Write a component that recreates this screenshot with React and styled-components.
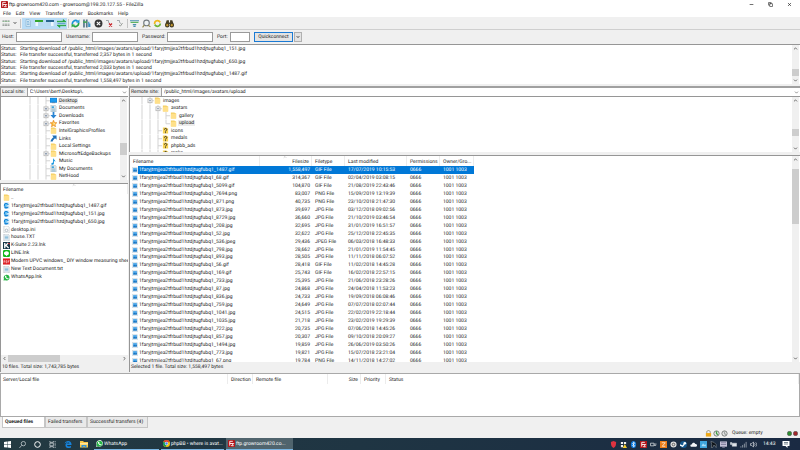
import styled, { createGlobalStyle, css } from "styled-components";
import {
  ChevronDown,
  ChevronUp,
  ChevronLeft,
  ChevronRight,
  Minus,
  Copy,
  X,
} from "lucide-react";

const GlobalStyle = createGlobalStyle`
  * {
    box-sizing: border-box;
  }

  body {
    margin: 0;
    background: #f0f0f0;
  }

  body, button, input, select, table {
    font-family: Roboto, "Liberation Sans", sans-serif;
    font-size: 5px;
    line-height: 6px;
    color: #1c1c1c;
    text-rendering: geometricPrecision;
  }
`;

/* ---------- icons ---------- */

const Svg = styled.svg`
  flex: none;
  display: block;
  width: ${(p) => p.$size || 7}px;
  height: ${(p) => p.$size || 7}px;
`;

const Icon = ({ size, children }) => (
  <Svg $size={size} viewBox="0 0 16 16" fill="none" aria-hidden="true">
    {children}
  </Svg>
);

const FileZillaIcon = ({ size }) => (
  <Icon size={size}>
    <rect width="16" height="16" rx="1" fill="#b4161b" />
    <path d="M4 13V3h7M4 8h5M8 8h5l-5 5h5" stroke="#fff" strokeWidth="2" />
  </Icon>
);

const FolderIcon = ({ size }) => (
  <Icon size={size}>
    <path d="M2 1h8l2 2h2v12H2z" fill="#f5cf63" />
    <path d="M4 4h10v11H2V6z" fill="#ffe08a" />
  </Icon>
);

const UnknownIcon = () => (
  <Icon>
    <path d="M2 1h8l2 2h2v12H2z" fill="#f6d254" />
    <path
      d="M5.500 6c0-3.500 5.500-3.500 5.500 0 0 2-3 2-3 4.500M8 12v2"
      stroke="#222"
      strokeWidth="2"
    />
  </Icon>
);

const DesktopIcon = () => (
  <Icon>
    <rect x="0" y="2" width="16" height="11" fill="#0c7cd5" />
    <rect x="1" y="3" width="14" height="8" fill="#1e9bf0" />
    <rect x="4" y="13" width="8" height="1" fill="#4a5a66" />
  </Icon>
);

const DocumentsIcon = () => (
  <Icon>
    <path d="M2 0h9l3 3v13H2z" fill="#dfe6ea" stroke="#9ba9b3" />
    <rect x="4" y="3" width="5" height="4" fill="#3fa3dc" />
    <path d="M4 9h8M4 11.500h8M4 14h8" stroke="#5b9dc4" />
  </Icon>
);

const DownloadIcon = () => (
  <Icon>
    <path d="M6 0h4v7h5l-7 8-7-8h5z" fill="#2a84d2" />
  </Icon>
);

const StarIcon = () => (
  <Icon>
    <path
      d="M8 0l2.300 5.500 5.700.5-4.300 4 1.300 6-5-3.200L3 16l1.300-6L0 6l5.700-.5z"
      fill="#f9b233"
      stroke="#df7d18"
    />
    <path d="M8 4l1.200 3 3 .2-2.200 2 .6 3L8 10.500z" fill="#fff0b3" />
  </Icon>
);

const LinkIcon = () => (
  <Icon>
    <path d="M5 1h10v10l-3.500-3.500C9 10 7 12 6 15H1c1-5 4-8 7-10z" fill="#2170b8" />
  </Icon>
);

const MusicIcon = () => (
  <Icon>
    <path d="M7 0c1 4 6 4 5 9-1-2-2-2-3-3v6c0 4-6 5-6 1.500C3 11 6 10.500 7 11z" fill="#1796e0" />
  </Icon>
);

const ImageFileIcon = () => (
  <Icon size={6}>
    <path d="M1 0h11l3 3v13H1z" fill="#e3edf4" stroke="#b3c3cf" />
    <rect x="3" y="3" width="10" height="9" fill="#49a5e8" />
    <path d="M3 10l4-3 3 2 3-2v5H3z" fill="#1a72bd" />
  </Icon>
);

const LocalImageIcon = () => (
  <Icon>
    <path d="M3 0h9l3 3v13H3z" fill="#dcecf8" />
    <path d="M2 7c0-6 10-6 11 0H9L7 10H2zM3 11h10c-1 5-8 5-10 2z" fill="#1686d8" />
    <rect x="5" y="5" width="5" height="5" fill="#7accf5" />
  </Icon>
);

const TextFileIcon = () => (
  <Icon>
    <path d="M2 0h9l3 3v13H2z" fill="#f5f7f8" stroke="#8c9aa5" />
    <path d="M4 5h8M4 8h8M4 11h8" stroke="#5ba4cd" strokeWidth="1.500" />
  </Icon>
);

const IniFileIcon = () => (
  <Icon>
    <path d="M2 0h9l3 3v13H2z" fill="#fcfcfc" stroke="#a4a9ad" />
    <circle cx="8" cy="10" r="3" stroke="#a8b4bd" strokeWidth="2" />
  </Icon>
);

const KSuiteIcon = () => (
  <Icon>
    <rect width="16" height="16" fill="#153648" />
    <path d="M4 2v12M5 9l7-7M6 7l7 7" stroke="#fff" strokeWidth="3" />
    <path d="M10 2h5v4z" fill="#d53535" />
  </Icon>
);

const LineIcon = () => (
  <Icon>
    <rect width="16" height="16" rx="3" fill="#12b81c" />
    <path d="M8 3c7 0 7 7 2 9l-3 2v-2C0 11 1 3 8 3z" fill="#fff" />
  </Icon>
);

const PdfIcon = () => (
  <Icon>
    <rect y="1" width="16" height="14" fill="#dd2026" />
    <path d="M2 11V6h2v3H2M7 6v5h2V6zM12 11V6h3M12 8h2" stroke="#fff" />
  </Icon>
);

const WhatsAppIcon = () => (
  <Icon>
    <path d="M0 16l1.500-5A7.500 7.500 0 1 1 5 14.500z" fill="#fff" />
    <path d="M1 15l1.200-4A6.700 6.700 0 1 1 5 14z" fill="#25b544" />
    <path d="M5 4c-2 3 3 9 7 8l1-2-2-1-1 1-3-3 1-1-1-2z" fill="#fff" />
  </Icon>
);

const SiteManagerIcon = () => (
  <Icon size={8}>
    <path
      d="M1 2h4v4H1zM6 2h4v4H6zM11 2h4v4h-4zM1 9h4v4H1zM6 9h4v4H6zM11 9h4v4h-4z"
      fill="#b5bbb7"
    />
    <path d="M1 5h4M6 5h4M11 5h4" stroke="#6cb271" />
    <path d="M1 13h4M6 13h4M11 13h4" stroke="#6f7471" />
  </Icon>
);

const LogViewIcon = () => (
  <Icon size={8}>
    <path d="M4 1h6l3 3v11H4z" fill="#cfe6f5" stroke="#7fa9c6" />
    <path d="M6 5h4M6 8h5M6 11h5" stroke="#4c92c6" />
  </Icon>
);

const LocalTreeIcon = () => (
  <Icon size={8}>
    <path d="M0 2h16v4H0z" fill="#35a52e" />
    <path d="M1 6v8h5V6z" fill="#eef7ff" />
    <path d="M7 6h8v8H7z" fill="#b8d9ef" />
  </Icon>
);

const RemoteTreeIcon = () => (
  <Icon size={8}>
    <path d="M0 2h16v4H0z" fill="#276590" />
    <path d="M1 6h8v8H1z" fill="#b8d9ef" />
    <path d="M10 6h5v8h-5z" fill="#eef7ff" />
  </Icon>
);

const QueueViewIcon = () => (
  <Icon size={9}>
    <path d="M0 4h11V1l5 4H0zM16 12H5v3L0 11h16z" fill="#18a02d" stroke="#18a02d" />
    <path d="M1 8h14" stroke="#2176bc" />
  </Icon>
);

const RefreshIcon = () => (
  <Icon size={9}>
    <path d="M2.500 9a5.500 5.500 0 0 1 9-5" stroke="#1795d8" strokeWidth="3" />
    <path d="M13.500 7a5.500 5.500 0 0 1-9 5" stroke="#23a743" strokeWidth="3" />
    <path d="M9 6l6 1V1z" fill="#1795d8" />
    <path d="M7 10l-6-1v6z" fill="#23a743" />
  </Icon>
);

const ProcessIcon = () => (
  <Icon size={9}>
    <path d="M2 1h3v14H2zM7 1h3v14H7z" fill="#58788b" />
    <path d="M12 5v9M14 8v6" stroke="#3b92c6" strokeWidth="2" />
    <path d="M2 4h7v3H2z" fill="#49a35a" />
  </Icon>
);

const CancelIcon = () => (
  <Icon size={9}>
    <circle cx="8" cy="8" r="7" fill="#373737" />
    <path d="M5 5l6 6M11 5l-6 6" stroke="#fff" strokeWidth="2" />
  </Icon>
);

const DisconnectIcon = () => (
  <Icon size={8}>
    <path d="M2 3h5v4l3 2" stroke="#a3a8ac" strokeWidth="2" />
    <path d="M8 9l6 6M14 9l-6 6" stroke="#c92129" strokeWidth="2.500" />
  </Icon>
);

const ReconnectIcon = () => (
  <Icon size={8}>
    <path d="M2 3h5v4l3 2" stroke="#a3a8ac" strokeWidth="2" />
    <path d="M6 12l3 2 4-6" stroke="#9a9f9a" strokeWidth="2" />
  </Icon>
);

const FilterIcon = () => (
  <Icon size={9}>
    <path d="M0 3h16M5 10h6M6 13h4" stroke="#4a8fae" strokeWidth="2" />
    <path d="M1 5h14v2H1z" fill="#57b05a" />
  </Icon>
);

const CompareIcon = () => (
  <Icon size={9}>
    <circle cx="8" cy="7" r="5" fill="#eef3f5" stroke="#747b80" strokeWidth="2" />
    <path d="M4 11l-3 4M11 11l4 3" stroke="#92874b" strokeWidth="2" />
  </Icon>
);

const SyncIcon = () => (
  <Icon size={9}>
    <path d="M3 9a5 5 0 0 1 8-5l2 2" stroke="#f0b81c" strokeWidth="3" />
    <path d="M13 8a5 5 0 0 1-8 4l-2-2" stroke="#6fb536" strokeWidth="3" />
  </Icon>
);

const BinocularsIcon = () => (
  <Icon size={9}>
    <path d="M3 2h4v4h2V2h4l3 9H9V9H7v2H0z" fill="#453d25" />
    <circle cx="4" cy="11" r="3" fill="#c89b30" stroke="#453d25" strokeWidth="2" />
    <circle cx="12" cy="11" r="3" fill="#c89b30" stroke="#453d25" strokeWidth="2" />
  </Icon>
);

const WindowsIcon = () => (
  <Icon>
    <path d="M0 2l7-1v6.500H0zM8 1l8-1v7.500H8zM0 8.500h7V15l-7-1zM8 8.500h8V16l-8-1z" fill="#fff" />
  </Icon>
);

const SearchIcon = () => (
  <Icon>
    <circle cx="10" cy="6" r="5" stroke="#e2e7e9" strokeWidth="1.500" />
    <path d="M6 10l-5 6" stroke="#e2e7e9" strokeWidth="1.500" />
  </Icon>
);

const CortanaIcon = () => (
  <Icon>
    <circle cx="8" cy="8" r="6.500" stroke="#fff" strokeWidth="2.200" />
  </Icon>
);

const TaskViewIcon = () => (
  <Icon>
    <path d="M2 0v3h8V0M2 16v-3h8v3M2 5h8v6H2zM14 0v3M14 5v6M14 13v3" stroke="#e2e7e9" strokeWidth="1.500" />
  </Icon>
);

const EdgeIcon = () => (
  <Icon size={8}>
    <path
      d="M1 8C2 1 14-1 15 8v2H6c1 4 5 3 8 2v3C8 18 2 15 3 9c1-2 2-3 4-4-3 0-5 1-6 3zM6 7h5c0-3-4-3-5 0z"
      fill="#1683dc"
    />
  </Icon>
);

const ExplorerIcon = () => (
  <Icon size={8}>
    <path d="M0 2h6l2 2h8v11H0z" fill="#f8c745" />
    <path d="M0 6h16v3H0z" fill="#ffe59a" />
    <path d="M3 15v-5h10v5h-3v-2H6v2z" fill="#3193d8" />
  </Icon>
);

const ChromeIcon = () => (
  <Icon>
    <circle cx="8" cy="8" r="8" fill="#f4c20d" />
    <path d="M8 8L1 4a8 8 0 0 1 14 0z" fill="#db4437" />
    <path d="M8 8L1 4a8 8 0 0 0 6 12z" fill="#0f9d58" />
    <circle cx="8" cy="8" r="3.800" fill="#fff" />
    <circle cx="8" cy="8" r="2.800" fill="#4285f4" />
  </Icon>
);

const LockIcon = () => (
  <Icon>
    <path d="M4 8V5c0-5 8-5 8 0v3" stroke="#8b8673" strokeWidth="2" />
    <rect x="2" y="7" width="12" height="8" fill="#eda715" />
  </Icon>
);

const GearIcon = ({ fill }) => (
  <Icon>
    <circle cx="8" cy="8" r="6" stroke="#6e7370" strokeWidth="2" fill="#e8e8e8" />
    <path d="M8 3v5l3 3" stroke={fill} strokeWidth="3" />
  </Icon>
);

const Led = ({ fill }) => (
  <Icon size={5}>
    <circle cx="8" cy="8" r="7" fill={fill} stroke="#555" strokeWidth="2" />
  </Icon>
);

const trayIcons = [
  <path key="shield" d="M2 2l6-2 6 2c0 7-1 11-6 14C3 13 2 9 2 2z" fill="#df3340" />,
  <g key="defender">
    <path d="M2 2h5v5H2zM9 2h5v5H9zM2 9h5v5H2z" fill="#f2f2f2" />
    <path d="M11 7l5 9H6z" fill="#f3cb2c" />
  </g>,
  <g key="bluetooth">
    <ellipse cx="8" cy="8" rx="6" ry="8" fill="#0f7be0" />
    <path d="M5 5l6 6-3 3V2l3 3-6 6" stroke="#fff" strokeWidth="1.500" />
  </g>,
  <g key="filezilla">
    <rect width="16" height="16" fill="#b4161b" />
    <path d="M4 13V3h7M4 8h5M8 8h5l-5 5h5" stroke="#fff" strokeWidth="2" />
  </g>,
  <path key="plug" d="M1 5h8v6H1zM9 7h6M9 10h5" stroke="#c0c6cc" strokeWidth="2" />,
  <g key="orange">
    <rect width="16" height="16" fill="#ed7d1a" />
    <path d="M4 4h8l-7 8h7" stroke="#ffe7cf" strokeWidth="2" />
  </g>,
  <g key="disc">
    <circle cx="8" cy="8" r="7" fill="#dedede" />
    <circle cx="8" cy="8" r="3" stroke="#555" strokeWidth="2" />
  </g>,
  <g key="steam">
    <circle cx="8" cy="8" r="8" fill="#16588f" />
    <circle cx="11" cy="5" r="3" fill="#fff" />
    <path d="M0 9l6 3 4-5" stroke="#fff" strokeWidth="3" />
  </g>,
  <path key="cloud" d="M2 13c-3-3 0-6 2-5 1-6 8-5 8-1 5 0 5 5 2 6z" fill="#f3f5f7" />,
  <g key="photo">
    <rect width="16" height="16" fill="#3ea4de" />
    <path d="M3 12l4-7 3 4 2-2 2 5z" fill="#a7dcf8" />
  </g>,
  <path key="horse" d="M2 1l7 2 5 5v7l-5-6-3 6H3l1-7z" fill="#0b1118" stroke="#b4b9bd" />,
  <g key="monitor">
    <rect y="1" width="16" height="12" fill="#c6c3d8" />
    <path d="M2 4h12M2 8h12M5 15h6" stroke="#7d7a99" strokeWidth="2" />
  </g>,
  <path key="battery" d="M1 3v5h3V3M5 5h10v7H5z" fill="#dfe4e8" stroke="#dfe4e8" />,
  <path key="wifi" d="M2 15v-3M6 15V9M10 15V6M14 15V2" stroke="#939eaa" strokeWidth="2" />,
  <path
    key="volume"
    d="M1 6h3l4-4v12l-4-4H1zM10 5c2 2 2 4 0 6M13 3c3 3 3 7 0 10"
    stroke="#dfe4e8"
    strokeWidth="1.500"
  />,
];

/* ---------- window frame ---------- */

const Page = styled.div`
  display: flex;
  flex-direction: column;
  height: 100vh;
  min-width: 480px;
  overflow: hidden;
  white-space: nowrap;
`;

const TitleBar = styled.header`
  display: flex;
  align-items: center;
  gap: 1px;
  flex: none;
  height: 9px;
  padding: 0 8px 0 1px;
  background: #fff;
`;

const WindowTitle = styled.h1`
  flex: 1;
  margin: 0;
  padding-top: 1px;
  font-size: 5px;
  font-weight: 400;
`;

const WindowButtons = styled.div`
  display: flex;
  gap: 14px;
`;

const PlainButton = styled.button`
  display: flex;
  align-items: center;
  justify-content: center;
  flex: none;
  padding: 0;
  border: 0;
  background: transparent;
`;

const MenuBar = styled.nav`
  display: flex;
  flex: none;
  gap: 5px;
  height: 8px;
  padding: 2px 3px 0;
  background: #fff;
`;

const MenuLink = styled.a`
  color: inherit;
  text-decoration: none;
`;

const Toolbar = styled.div`
  display: flex;
  align-items: center;
  flex: none;
  height: 13px;
  padding-left: 2px;
  background: #f0f0f0;
  border-bottom: 1px solid #cfcfcf;
`;

const ToolGroup = styled.div`
  display: flex;
  width: ${(p) => p.$width}px;
  background: ${(p) => (p.$pressed ? "#b9dcf6" : "transparent")};
`;

const ToolButton = styled(PlainButton)`
  flex: 1;
  height: 11px;
`;

const ToolSeparator = styled.span`
  width: 1px;
  height: 9px;
  margin: 0 1px;
  background: #c4c4c4;
`;

const ConnectBar = styled.form`
  display: flex;
  align-items: center;
  flex: none;
  gap: 4px;
  height: 14px;
  padding-left: 2px;
`;

const Field = styled.label`
  display: flex;
  align-items: center;
  justify-content: space-between;
  width: ${(p) => p.$width}px;
`;

const TextInput = styled.input`
  width: ${(p) => p.$width}px;
  height: 10px;
  padding: 0 2px;
  border: 1px solid #9a9a9a;
  background: #fff;
`;

const ConnectButton = styled.button`
  width: 39px;
  height: 10px;
  padding: 0;
  border: 1px solid #1a7ad4;
  background: #e3e3e3;
`;

const ConnectMenuButton = styled(PlainButton)`
  width: 8px;
  height: 10px;
  margin-left: -3px;
  border: 1px solid #b0b0b0;
  background: #e3e3e3;
`;

/* ---------- panes ---------- */

const Pane = styled.section`
  display: flex;
  min-width: 0;
  min-height: 0;
  flex: ${(p) => (p.$height ? "none" : "1")};
  height: ${(p) => (p.$height ? `${p.$height}px` : "auto")};
  border-top: 1px solid #969696;
  border-left: 1px solid #969696;
  background: #fff;
`;

const PaneBody = styled.div`
  flex: 1;
  min-width: 0;
  min-height: 0;
  overflow: hidden;
`;

const Splitter = styled.div`
  flex: none;
  height: 3px;
`;

const ScrollTrack = styled.div`
  display: flex;
  flex: none;
  flex-direction: ${(p) => (p.$horizontal ? "row" : "column")};
  align-items: center;
  ${(p) => (p.$horizontal ? "height: 7px;" : "width: 7px; margin-right: 1px;")}
  background: #f0f0f0;
`;

const ScrollSpace = styled.span`
  flex: ${(p) => p.$grow} 1 0;
  align-self: stretch;
  background: ${(p) => (p.$thumb ? "#cdcdcd" : "transparent")};
`;

const ScrollButton = styled(PlainButton)`
  width: 7px;
  height: 7px;
`;

const ScrollBar = ({ horizontal, before, thumb, after }) => {
  const Start = horizontal ? ChevronLeft : ChevronUp;
  const End = horizontal ? ChevronRight : ChevronDown;
  return (
    <ScrollTrack $horizontal={horizontal}>
      <ScrollButton type="button" aria-label="Scroll back">
        <Start size={5} strokeWidth={4} color="#555" />
      </ScrollButton>
      <ScrollSpace $grow={before} />
      <ScrollSpace $grow={thumb} $thumb />
      <ScrollSpace $grow={after} />
      <ScrollButton type="button" aria-label="Scroll forward">
        <End size={5} strokeWidth={4} color="#555" />
      </ScrollButton>
    </ScrollTrack>
  );
};

const LogList = styled.ol`
  display: flex;
  flex-direction: column;
  height: 39px;
  margin: 0;
  padding: 1px 0 0;
  list-style: none;
`;

const LogLine = styled.li`
  display: flex;
  flex: 1;
  align-items: center;
`;

const LogType = styled.span`
  width: 19px;
`;

const Workspace = styled.main`
  display: flex;
  flex: 1;
  gap: 2px;
  min-height: 0;
  padding: 2px 0 1px;
`;

const Side = styled.div`
  display: flex;
  flex-direction: column;
  min-width: 0;
  ${(p) => (p.$local ? "width: 16%; margin-right: -1px;" : "flex: 1;")}
`;

const SiteBar = styled.div`
  display: flex;
  flex: none;
  height: 10px;
  border-top: 2px solid #a0a0a0;
  border-left: 1px solid #969696;
  background: #fff;
`;

const SiteLabel = styled.label`
  display: flex;
  align-items: center;
  padding: 0 2px 0 1px;
  border-right: 1px solid #a0a0a0;
  background: #f0f0f0;
`;

const SiteSelect = styled.select`
  flex: 1;
  min-width: 0;
  padding: 0 2px;
  border: 0;
  appearance: none;
  background: transparent;
`;

const SiteArrow = styled.span`
  display: flex;
  align-items: center;
  padding: 0 1px;
  pointer-events: none;
`;

const Tree = styled.ul`
  display: flex;
  flex-direction: column;
  height: ${(p) => p.$height}px;
  margin: 0;
  padding: 0 0 0 ${(p) => p.$indent}px;
  list-style: none;
`;

const TreeItem = styled.li`
  display: flex;
  align-items: center;
  flex: 1;
  min-height: 0;
`;

const TreeLabel = styled.span`
  margin-left: 1px;
  padding: 0 1px;
  background: ${(p) => (p.$active ? "#ececec" : "transparent")};
`;

const Guide = styled.svg`
  flex: none;
  align-self: stretch;
  width: 8px;
`;

const TreeGuide = ({ kind }) => (
  <Guide viewBox="0 0 8 8" preserveAspectRatio="none" fill="none" aria-hidden="true">
    <path
      d={{ v: "M4 0v8", l: "M4 0v4h4" }[kind] || "M4 0v8M4 4h4"}
      stroke="#d2d2d2"
    />
    {(kind === "+" || kind === "-") && (
      <>
        <rect x="2" y="2" width="4" height="4" fill="#fff" stroke="#bdbdbd" />
        <path d={kind === "+" ? "M3 4h2M4 3v2" : "M3 4h2"} stroke="#8090a5" />
      </>
    )}
  </Guide>
);

const TreeView = ({ nodes, height, indent }) => (
  <Tree $height={height} $indent={indent}>
    {nodes.map(([guides, NodeIcon, label, active]) => (
      <TreeItem key={label}>
        {guides.split("").map((kind, i) => (
          <TreeGuide key={i} kind={kind} />
        ))}
        <NodeIcon />
        <TreeLabel $active={active}>{label}</TreeLabel>
      </TreeItem>
    ))}
  </Tree>
);

/* ---------- tables ---------- */

const Table = styled.table`
  display: flex;
  flex-direction: column;
`;

const gridRow = css`
  display: grid;
  grid-template-columns: ${(p) => p.$columns};
`;

const HeadRow = styled.tr`
  ${gridRow}
  height: ${(p) => p.$height || 10}px;
`;

const HeadCell = styled.th`
  position: relative;
  padding: 3px 2px 0 ${(p) => (p.$flush ? 2 : 3)}px;
  overflow: hidden;
  border-right: 1px solid #ececec;
  font-weight: 400;
  text-align: ${(p) => (p.$right ? "right" : "left")};
`;

const SortMark = styled(ChevronUp)`
  position: absolute;
  top: -1px;
  left: ${(p) => p.$left};
`;

const Body = styled.tbody`
  display: flex;
  flex-direction: column;
  height: ${(p) => p.$height}px;
`;

const BodyRow = styled.tr`
  ${gridRow}
  flex: 1;
  min-height: 0;
  color: ${(p) => (p.$selected ? "#fff" : "inherit")};
`;

const Cell = styled.td`
  display: flex;
  align-items: center;
  justify-content: ${(p) => (p.$right ? "flex-end" : "flex-start")};
  padding: 0 2px 0 3px;
  background: ${(p) => (p.$selected ? "#0078d7" : "transparent")};
`;

const NameCell = styled.td`
  display: flex;
  align-items: center;
  padding: 0 0 0 2px;
`;

const FileName = styled.span`
  display: flex;
  align-items: center;
  flex: 1;
  align-self: stretch;
  padding-left: 1px;
  background: ${(p) => (p.$selected ? "#0078d7" : "transparent")};
`;

const Column = styled.div`
  display: flex;
  flex: 1;
  flex-direction: column;
  min-width: 0;
`;

const PaneStatus = styled.p`
  flex: none;
  height: 10px;
  margin: 0;
  padding: 2px 1px;
  border-left: 1px solid #969696;
`;

const QueuePane = styled.section`
  flex: none;
  height: 44px;
  border: 1px solid #a9a9a9;
  background: #fff;
`;

const TabList = styled.div`
  display: flex;
  flex: none;
  height: 11px;
  padding-left: 2px;
`;

const Tab = styled.button`
  min-width: ${(p) => p.$width}px;
  padding: 0 2px;
  border: 1px solid #c6c6c6;
  border-top: 0;
  background: ${(p) => (p.$active ? "#fff" : "#e9e9e9")};
  font-weight: ${(p) => (p.$active ? 700 : 400)};
  text-align: left;
`;

const StatusBar = styled.footer`
  display: flex;
  align-items: center;
  justify-content: flex-end;
  flex: none;
  gap: 1px;
  height: 10px;
  padding-right: 2px;
`;

const QueueState = styled.span`
  width: 54px;
  margin-left: 3px;
`;

const Taskbar = styled.nav`
  display: flex;
  align-items: center;
  flex: none;
  height: 12px;
  padding-left: 4px;
  background: linear-gradient(90deg, #233a42, #1f3543 45%, #1a2a43);
`;

const TaskButtons = styled.div`
  display: flex;
  gap: 8px;
  width: 90px;
`;

const TaskWindow = styled.button`
  display: flex;
  align-items: center;
  gap: 1px;
  width: ${(p) => p.$width}px;
  height: 12px;
  margin-right: 2px;
  padding: 0 2px;
  border: 0;
  border-bottom: 1px solid #79b6e4;
  background: ${(p) => (p.$active ? "#50646d" : "transparent")};
  color: #fff;
`;

const Tray = styled.div`
  display: flex;
  align-items: center;
  gap: 3px;
  margin-left: auto;
  padding-right: 10px;
  color: #fff;
`;

const Clock = styled.time`
  width: 16px;
  margin-left: 3px;
`;

/* ---------- data ---------- */

const HASH = "1faryjtmjjea2tfrbud1hzdjtugfubq1_";

const log = [
  `Starting download of /public_html/images/avatars/upload/${HASH}151.jpg`,
  "File transfer successful, transferred 2,357 bytes in 1 second",
  `Starting download of /public_html/images/avatars/upload/${HASH}650.jpg`,
  "File transfer successful, transferred 2,033 bytes in 1 second",
  `Starting download of /public_html/images/avatars/upload/${HASH}1487.gif`,
  "File transfer successful, transferred 1,558,497 bytes in 1 second",
];

// one letter per guide column: v line, t tee, l last, + and - expanders
const localTree = [
  ["vvt", DesktopIcon, "Desktop", true],
  ["vv+", DocumentsIcon, "Documents"],
  ["vv+", DownloadIcon, "Downloads"],
  ["vv+", StarIcon, "Favorites"],
  ["vvt", FolderIcon, "IntelGraphicsProfiles"],
  ["vvt", LinkIcon, "Links"],
  ["vvt", FolderIcon, "Local Settings"],
  ["vv+", FolderIcon, "MicrosoftEdgeBackups"],
  ["vvt", MusicIcon, "Music"],
  ["vvt", DocumentsIcon, "My Documents"],
  ["vvt", FolderIcon, "NetHood"],
];

const remoteTree = [
  ["v-", FolderIcon, "images"],
  ["vv-", FolderIcon, "avatars"],
  ["vvvt", FolderIcon, "gallery"],
  ["vvvl", FolderIcon, "upload", true],
  ["vvt", UnknownIcon, "icons"],
  ["vvt", UnknownIcon, "medals"],
  ["vvt", UnknownIcon, "phpbb_ads"],
  ["vvt", UnknownIcon, "ranks"],
];

const localFiles = [
  [FolderIcon, ".."],
  [LocalImageIcon, `${HASH}1487.gif`],
  [LocalImageIcon, `${HASH}151.jpg`],
  [LocalImageIcon, `${HASH}650.jpg`],
  [IniFileIcon, "desktop.ini"],
  [TextFileIcon, "house.TXT"],
  [KSuiteIcon, "K-Suite 2.23.lnk"],
  [LineIcon, "LINE.lnk"],
  [PdfIcon, "Modern UPVC windows_ DIY window measuring sheet"],
  [TextFileIcon, "New Text Document.txt"],
  [WhatsAppIcon, "WhatsApp.lnk"],
];

const remoteFiles = [
  ["1487.gif", "1,558,497", "17/07/2019 10:15:53"],
  ["68.gif", "314,367", "02/04/2019 03:08:15"],
  ["5099.gif", "104,870", "21/08/2019 22:43:46"],
  ["7694.png", "83,007", "15/09/2019 13:19:39"],
  ["871.png", "40,735", "23/10/2018 21:47:30"],
  ["873.jpg", "39,697", "03/12/2018 09:02:56"],
  ["8729.jpg", "36,660", "21/10/2019 03:46:54"],
  ["208.jpg", "32,695", "31/01/2019 16:51:57"],
  ["52.jpg", "32,622", "25/12/2018 22:45:35"],
  ["536.jpeg", "29,436", "06/03/2018 16:48:33"],
  ["798.jpg", "28,662", "21/01/2019 11:54:45"],
  ["893.jpg", "28,505", "11/11/2018 06:07:52"],
  ["56.gif", "28,418", "11/02/2018 14:45:28"],
  ["169.gif", "25,743", "16/02/2018 22:57:15"],
  ["733.jpg", "25,395", "21/06/2018 23:28:26"],
  ["87.jpg", "24,868", "24/04/2018 11:53:23"],
  ["836.jpg", "24,733", "19/09/2018 06:08:46"],
  ["759.jpg", "24,649", "07/07/2018 02:07:44"],
  ["1041.jpg", "24,515", "22/02/2019 22:18:44"],
  ["1035.jpg", "21,718", "23/02/2019 19:29:39"],
  ["722.jpg", "20,735", "07/06/2018 14:45:26"],
  ["857.jpg", "20,307", "09/10/2018 20:09:27"],
  ["1494.jpg", "19,859", "26/06/2019 03:50:26"],
  ["773.jpg", "19,821", "15/07/2018 23:21:04"],
  ["67.png", "19,784", "14/11/2018 14:27:02"],
];

const REMOTE_COLUMNS = "130px 52px 33px 62px 33px 34px";
const QUEUE_COLUMNS = "227px 25px 75px 33px 25px 1fr";

const viewTools = [
  ["Toggle message log", LogViewIcon],
  ["Toggle local tree", LocalTreeIcon],
  ["Toggle remote tree", RemoteTreeIcon],
  ["Toggle transfer queue", QueueViewIcon],
];

const transferTools = [
  ["Refresh", RefreshIcon],
  ["Process queue", ProcessIcon],
  ["Cancel", CancelIcon],
  ["Disconnect", DisconnectIcon],
  ["Reconnect", ReconnectIcon],
];

const searchTools = [
  ["Filter", FilterIcon],
  ["Compare", CompareIcon],
  ["Synchronized browsing", SyncIcon],
  ["Find files", BinocularsIcon],
];

const taskShortcuts = [
  ["Start", WindowsIcon],
  ["Search", SearchIcon],
  ["Cortana", CortanaIcon],
  ["Task view", TaskViewIcon],
  ["Edge", EdgeIcon],
  ["Explorer", ExplorerIcon],
];

const Tools = ({ items, width, pressed }) => (
  <ToolGroup $width={width} $pressed={pressed}>
    {items.map(([label, ToolIcon]) => (
      <ToolButton key={label} aria-label={label}>
        <ToolIcon />
      </ToolButton>
    ))}
  </ToolGroup>
);

const SitePath = ({ id, label, path }) => (
  <SiteBar>
    <SiteLabel htmlFor={id}>{label}</SiteLabel>
    <SiteSelect id={id}>
      <option>{path}</option>
    </SiteSelect>
    <SiteArrow>
      <ChevronDown size={5} strokeWidth={3} color="#555" />
    </SiteArrow>
  </SiteBar>
);

const LocalTable = () => (
  <Table>
    <thead>
      <HeadRow $columns="1fr" $height={10}>
        <HeadCell $flush>
          Filename
          <SortMark size={4} strokeWidth={2} color="#777" $left="56%" />
        </HeadCell>
      </HeadRow>
    </thead>
    <Body $height={87}>
      {localFiles.map(([FileIcon, name]) => (
        <BodyRow key={name} $columns="1fr">
          <NameCell>
            <FileIcon />
            <FileName>{name}</FileName>
          </NameCell>
        </BodyRow>
      ))}
    </Body>
  </Table>
);

const RemoteTable = () => (
  <Table>
    <thead>
      <HeadRow $columns={REMOTE_COLUMNS}>
        <HeadCell>Filename</HeadCell>
        <HeadCell $right>
          Filesize
          <SortMark size={4} strokeWidth={2} color="#777" $left="46%" />
        </HeadCell>
        <HeadCell>Filetype</HeadCell>
        <HeadCell>Last modified</HeadCell>
        <HeadCell>Permissions</HeadCell>
        <HeadCell>Owner/Gro...</HeadCell>
      </HeadRow>
    </thead>
    <Body $height={199}>
      {remoteFiles.map(([name, size, modified], i) => {
        const selected = i === 0;
        return (
          <BodyRow key={name} $columns={REMOTE_COLUMNS} $selected={selected}>
            <NameCell>
              <ImageFileIcon />
              <FileName $selected={selected}>{HASH + name}</FileName>
            </NameCell>
            <Cell $right $selected={selected}>
              {size}
            </Cell>
            <Cell $selected={selected}>{name.split(".")[1].toUpperCase()} File</Cell>
            <Cell $selected={selected}>{modified}</Cell>
            <Cell $selected={selected}>0666</Cell>
            <Cell $selected={selected}>1001 1003</Cell>
          </BodyRow>
        );
      })}
    </Body>
  </Table>
);

const App = () => (
  <>
    <GlobalStyle />
    <Page>
      <TitleBar>
        <FileZillaIcon size={7} />
        <WindowTitle>ftp.growroom420.com - growroom@198.20.127.55 - FileZilla</WindowTitle>
        <WindowButtons>
          <PlainButton aria-label="Minimize">
            <Minus size={5} strokeWidth={3} />
          </PlainButton>
          <PlainButton aria-label="Restore">
            <Copy size={5} strokeWidth={3} />
          </PlainButton>
          <PlainButton aria-label="Close">
            <X size={5} strokeWidth={3} />
          </PlainButton>
        </WindowButtons>
      </TitleBar>

      <MenuBar>
        {["File", "Edit", "View", "Transfer", "Server", "Bookmarks", "Help"].map((item) => (
          <MenuLink key={item} href="#">
            {item}
          </MenuLink>
        ))}
      </MenuBar>

      <Toolbar>
        <ToolGroup $width={17}>
          <ToolButton aria-label="Site manager">
            <SiteManagerIcon />
          </ToolButton>
          <ToolButton aria-label="Site list">
            <ChevronDown size={4} strokeWidth={5} />
          </ToolButton>
        </ToolGroup>
        <ToolSeparator />
        <Tools items={viewTools} width={45} pressed />
        <ToolSeparator />
        <Tools items={transferTools} width={56} />
        <ToolSeparator />
        <Tools items={searchTools} width={46} />
      </Toolbar>

      <ConnectBar onSubmit={(e) => e.preventDefault()}>
        <Field $width={60}>
          Host:
          <TextInput $width={46} />
        </Field>
        <Field $width={72}>
          Username:
          <TextInput $width={46} />
        </Field>
        <Field $width={71}>
          Password:
          <TextInput $width={46} type="password" />
        </Field>
        <Field $width={33}>
          Port:
          <TextInput $width={20} />
        </Field>
        <ConnectButton>Quickconnect</ConnectButton>
        <ConnectMenuButton type="button" aria-label="Recent servers">
          <ChevronDown size={4} strokeWidth={5} />
        </ConnectMenuButton>
      </ConnectBar>

      <Pane $height={40}>
        <PaneBody>
          <LogList>
            {log.map((message) => (
              <LogLine key={message}>
                <LogType>Status:</LogType>
                {message}
              </LogLine>
            ))}
          </LogList>
        </PaneBody>
        <ScrollBar before={17} thumb={7} after={1} />
      </Pane>

      <Workspace>
        <Side $local>
          <SitePath id="local-site" label="Local site:" path="C:\Users\bert\Desktop\." />
          <Pane $height={84}>
            <PaneBody>
              <TreeView nodes={localTree} height={83} indent={25} />
            </PaneBody>
            <ScrollBar before={39} thumb={12} after={18} />
          </Pane>
          <Splitter />
          <Pane>
            <Column>
              <PaneBody>
                <LocalTable />
              </PaneBody>
              <ScrollBar horizontal before={0} thumb={52} after={60} />
            </Column>
          </Pane>
          <PaneStatus>10 files. Total size: 1,743,785 bytes</PaneStatus>
        </Side>

        <Side>
          <SitePath id="remote-site" label="Remote site:" path="/public_html/images/avatars/upload" />
          <Pane $height={56}>
            <PaneBody>
              <TreeView nodes={remoteTree} height={60} indent={8} />
            </PaneBody>
            <ScrollBar before={25} thumb={7} after={9} />
          </Pane>
          <Splitter />
          <Pane>
            <PaneBody>
              <RemoteTable />
            </PaneBody>
            <ScrollBar before={6} thumb={54} after={130} />
          </Pane>
          <PaneStatus>Selected 1 file. Total size: 1,558,497 bytes</PaneStatus>
        </Side>
      </Workspace>

      <QueuePane>
        <Table>
          <thead>
            <HeadRow $columns={QUEUE_COLUMNS}>
              <HeadCell $flush>Server/Local file</HeadCell>
              <HeadCell>Direction</HeadCell>
              <HeadCell>Remote file</HeadCell>
              <HeadCell $right>Size</HeadCell>
              <HeadCell>Priority</HeadCell>
              <HeadCell>Status</HeadCell>
            </HeadRow>
          </thead>
        </Table>
      </QueuePane>
      <TabList role="tablist">
        <Tab role="tab" $active $width={43}>
          Queued files
        </Tab>
        <Tab role="tab" $width={42}>
          Failed transfers
        </Tab>
        <Tab role="tab" $width={61}>
          Successful transfers (4)
        </Tab>
      </TabList>

      <StatusBar>
        <LockIcon />
        <GearIcon fill="#3f9b44" />
        <GearIcon fill="#a0a5a3" />
        <QueueState>Queue: empty</QueueState>
        <Led fill="#2c8f30" />
        <Led fill="#a3262a" />
      </StatusBar>

      <Taskbar>
        <TaskButtons>
          {taskShortcuts.map(([label, ShortcutIcon]) => (
            <PlainButton key={label} aria-label={label}>
              <ShortcutIcon />
            </PlainButton>
          ))}
        </TaskButtons>
        <TaskWindow $width={65}>
          <WhatsAppIcon />
          WhatsApp
        </TaskWindow>
        <TaskWindow $width={63}>
          <ChromeIcon />
          phpBB • where is avat...
        </TaskWindow>
        <TaskWindow $width={67} $active>
          <FileZillaIcon size={7} />
          ftp.growroom420.co...
        </TaskWindow>
        <Tray>
          {trayIcons.map((shape) => (
            <Icon key={shape.key}>{shape}</Icon>
          ))}
          <Clock>14:43</Clock>
          <Icon size={8}>
            <path d="M1 2h14v10h-4v4l-4-4H1z" fill="#fff" />
            <path d="M4 5h8M4 8h8" stroke="#566574" strokeWidth="1.500" />
          </Icon>
        </Tray>
      </Taskbar>
    </Page>
  </>
);

export default App;
